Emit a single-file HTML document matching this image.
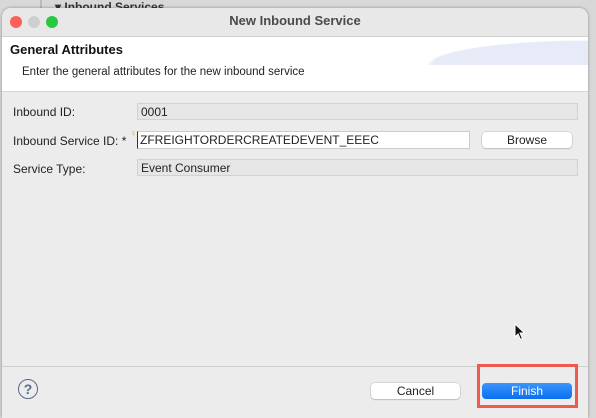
<!DOCTYPE html><html><head><style>
body{margin:0;width:596px;height:415px;background:#d8d8d8;position:relative;overflow:hidden;font-family:"Liberation Sans",sans-serif;font-size:12px;color:#222}
.a{position:absolute}
.dlg{left:2px;top:8px;width:586px;height:410px;background:#ececec;border-radius:9px 9px 0 0;box-shadow:0 0 3px rgba(0,0,0,.35);overflow:hidden}
.box{background:#e6e6e6;border:1px solid #d2d2d2;height:17px;line-height:17px;padding-left:3px;box-sizing:border-box}
.btn{background:#fff;border-radius:4px;box-shadow:0 0 0 .5px #bbb,0 1px 1px rgba(0,0,0,.2);text-align:center;height:16px;line-height:16px;font-size:12px}
</style></head><body>
<div class="a" style="left:40px;top:0;width:2px;height:30px;background:#bbb"></div>
<div class="a" style="left:55px;top:0;font-weight:bold;font-size:12px;color:#333">▾ Inbound Services</div>
<div class="a dlg">
 <div class="a" style="left:0;top:0;width:586px;height:28px;background:#e8e8e8;border-bottom:1px solid #d0d0d0"></div>
 <div class="a" style="left:8px;top:8px;width:12px;height:12px;border-radius:50%;background:#fe5f57"></div>
 <div class="a" style="left:26px;top:8px;width:12px;height:12px;border-radius:50%;background:#cfcfcf"></div>
 <div class="a" style="left:44px;top:8px;width:12px;height:12px;border-radius:50%;background:#28c840"></div>
 <div class="a" style="left:0;top:5px;width:586px;text-align:center;font-weight:bold;font-size:13px;color:#4a4a4a">New Inbound Service</div>
 <div class="a" style="left:0;top:29px;width:586px;height:54px;background:#fff;border-bottom:1px solid #d6d6d6"></div>
 <div class="a" style="left:400px;top:29px;width:186px;height:28px;background:radial-gradient(ellipse 260px 40px at 100% 100%,#e6ebf7 60%,rgba(255,255,255,0) 62%)"></div>
 <div class="a" style="left:8px;top:34px;font-weight:bold;font-size:13px;color:#111">General Attributes</div>
 <div class="a" style="left:20px;top:58px;font-size:11.5px">Enter the general attributes for the new inbound service</div>
 <div class="a" style="left:11px;top:97px">Inbound ID:</div>
 <div class="a box" style="left:135px;top:95px;width:441px">0001</div>
 <div class="a" style="left:11px;top:126px">Inbound Service ID: *</div>
 <div class="a" style="left:128px;top:120px;font-size:9px;color:#e8a33a">♀</div>
 <div class="a" style="left:135px;top:123px;width:333px;height:18px;background:#fff;border:1px solid #ccc;box-sizing:border-box;line-height:16px;padding-left:2px;border-left:1px solid #333">ZFREIGHTORDERCREATEDEVENT_EEEC</div>
 <div class="a btn" style="left:480px;top:124px;width:90px">Browse</div>
 <div class="a" style="left:11px;top:154px">Service Type:</div>
 <div class="a box" style="left:135px;top:151px;width:441px">Event Consumer</div>
 <div class="a" style="left:0;top:358px;width:586px;height:1px;background:#d0d0d0"></div>
 <div class="a" style="left:16px;top:371px;width:18px;height:18px;border:1.5px solid #5a6a88;border-radius:50%;text-align:center;line-height:18px;font-weight:bold;color:#5a6a88;font-size:14px">?</div>
 <div class="a btn" style="left:369px;top:375px;width:89px">Cancel</div>
 <div class="a" style="left:475px;top:356px;width:95px;height:38px;border:3px solid #ef5a4e;background:#ececec"></div>
 <div class="a" style="left:480px;top:375px;width:90px;height:16px;border-radius:4px;background:linear-gradient(#3a95fb,#0a6ff0);color:#fff;text-align:center;line-height:16px">Finish</div>
 <svg class="a" style="left:512px;top:315px" width="12" height="18" viewBox="0 0 12 18"><path d="M1 1 L1 14 L4 11 L6.5 16.5 L8.5 15.5 L6 10 L10.5 10 Z" fill="#111" stroke="#fff" stroke-width="1"/></svg>
</div>
</body></html>
